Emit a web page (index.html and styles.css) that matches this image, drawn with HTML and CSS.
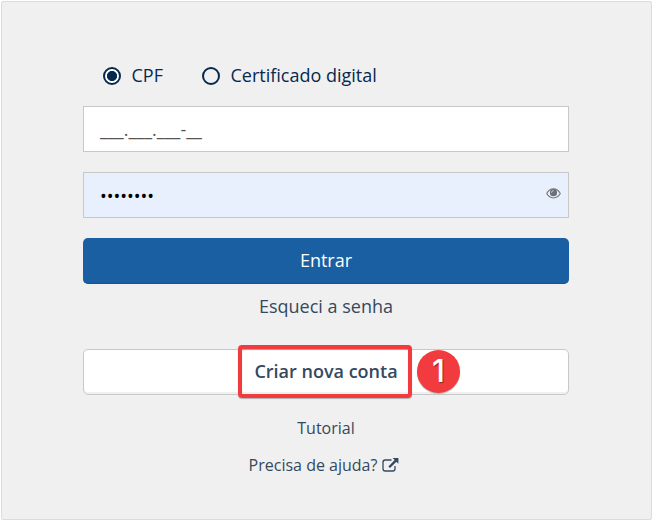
FILE: index.html
```html
<!DOCTYPE html>
<html lang="pt-BR">
<head>
<meta charset="utf-8">
<title>Login</title>
<link rel="stylesheet" href="styles.css">
</head>
<body>
<main class="card">
  <form class="login">
    <div class="options">
      <label class="option"><span class="radio checked"></span><span class="name">CPF</span></label>
      <label class="option"><span class="radio"></span><span class="name">Certificado digital</span></label>
    </div>
    <div class="field cpf"><span>___.___.___-__</span></div>
    <div class="field password">
      <span class="dots">••••••••</span>
      <svg class="eye" viewBox="0 0 15 11" width="15" height="11">
        <path d="M.7 5.6C4-.7 11-.7 14.3 5.6 11 11.4 4 11.4.7 5.6Z" fill="none" stroke="#777" stroke-width="1.1"/>
        <circle cx="7.5" cy="4.7" r="3.6" fill="#6c7075"/>
        <path d="M5.5 4.7q0-2 2-2" fill="none" stroke="#d5dce6" stroke-width=".9"/>
      </svg>
    </div>
    <button class="button primary" type="button">Entrar</button>
    <a class="forgot">Esqueci a senha</a>
    <div class="create">
      <button class="button secondary" type="button">Criar nova conta</button>
      <span class="highlight"></span>
      <span class="step"><span>1</span></span>
    </div>
    <a class="link tutorial">Tutorial</a>
    <a class="link help"><span>Precisa de ajuda?</span>
      <svg width="17" height="14" viewBox="0 0 17 14">
        <path d="M9.5 2H3.2Q1 2 1 4.2v6.6Q1 13 3.2 13h7.6q2.2 0 2.2-2.2V8" fill="none" stroke="#34495e" stroke-width="1.3"/>
        <path d="M10.6 0H16.4V5.8L14.4 3.8 8 10.1 6.4 8.5 12.7 2.1Z" fill="#34495e"/>
      </svg>
    </a>
  </form>
</main>
</body>
</html>
```

FILE: styles.css
```css
* { box-sizing: border-box; }
body {
  margin: 0;
  padding: 1px;
  height: 521px;
  background: #fff;
  font-family: "Open Sans", sans-serif;
  color: #34495e;
}
.card {
  width: 651px;
  height: 519px;
  padding: 62px 83px 0 81px;
  border: 1px solid #dcdcdc;
  border-radius: 2px;
  background: #f0f0f0;
}
.login {
  width: 486px;
  display: flex;
  flex-direction: column;
}
.options {
  display: flex;
  gap: 39px;
  height: 24px;
  margin-left: 20px;
  color: #07294d;
  font-size: 18px;
}
.option { display: flex; align-items: center; gap: 10.5px; }
.name { padding-bottom: 2px; }
.radio {
  width: 18px;
  height: 18px;
  border: 2px solid #07294d;
  border-radius: 50%;
  background: transparent;
}
.checked { background: radial-gradient(circle, #07294d 0 4.7px, #fff 5.4px); }
.field {
  display: flex;
  align-items: center;
  height: 46px;
  padding: 0 7px 0 16px;
  border: 1px solid #c8c8c8;
  background: #fff;
}
.cpf { margin-top: 18px; font-size: 18px; color: #555; }
.password {
  margin-top: 20px;
  justify-content: space-between;
  background: #e8f0fe;
}
.dots { color: #000; font-size: 18px; padding-top: 1px; }
.eye { margin-top: -4px; }
.button {
  width: 100%;
  height: 46px;
  padding: 0 0 2px;
  border-radius: 5px;
  font: 600 18px/42px "Open Sans", sans-serif;
}
.primary {
  margin-top: 20px;
  border: 0;
  border-bottom: 1px solid #17548e;
  background: #195fa1;
  color: #fff;
  font-weight: 500;
}
.forgot {
  margin-top: 9px;
  height: 26px;
  line-height: 26px;
  text-align: center;
  font-size: 18px;
}
.create { position: relative; height: 46px; margin-top: 30px; }
.secondary {
  display: block;
  border: 1px solid #c8c8c8;
  background: #fff;
  box-shadow: inset 0 -2px #f0f0f0;
  color: #34495e;
}
.highlight {
  position: absolute;
  left: 155px;
  top: -4px;
  width: 174px;
  height: 53px;
  border: 4px solid #f23b3e;
  border-radius: 4px;
  box-shadow: 0 1px 1px #8889, inset 0 1px 1px #8889;
}
.step {
  position: absolute;
  left: 334px;
  top: 1px;
  width: 43px;
  height: 43px;
  border-radius: 50%;
  background: #f23b3e;
  box-shadow: 0 1px 1px #8889;
  color: #fff;
  font: 500 31px/42px Inter, sans-serif;
  text-align: center;
  text-shadow: 1px 1px 1px #0006;
}
.link {
  display: flex;
  justify-content: center;
  align-items: center;
  height: 22px;
  font-size: 16px;
  gap: 5px;
}
.tutorial { margin-top: 22px; }
.help { margin-top: 15px; padding-right: 4px; }
```
